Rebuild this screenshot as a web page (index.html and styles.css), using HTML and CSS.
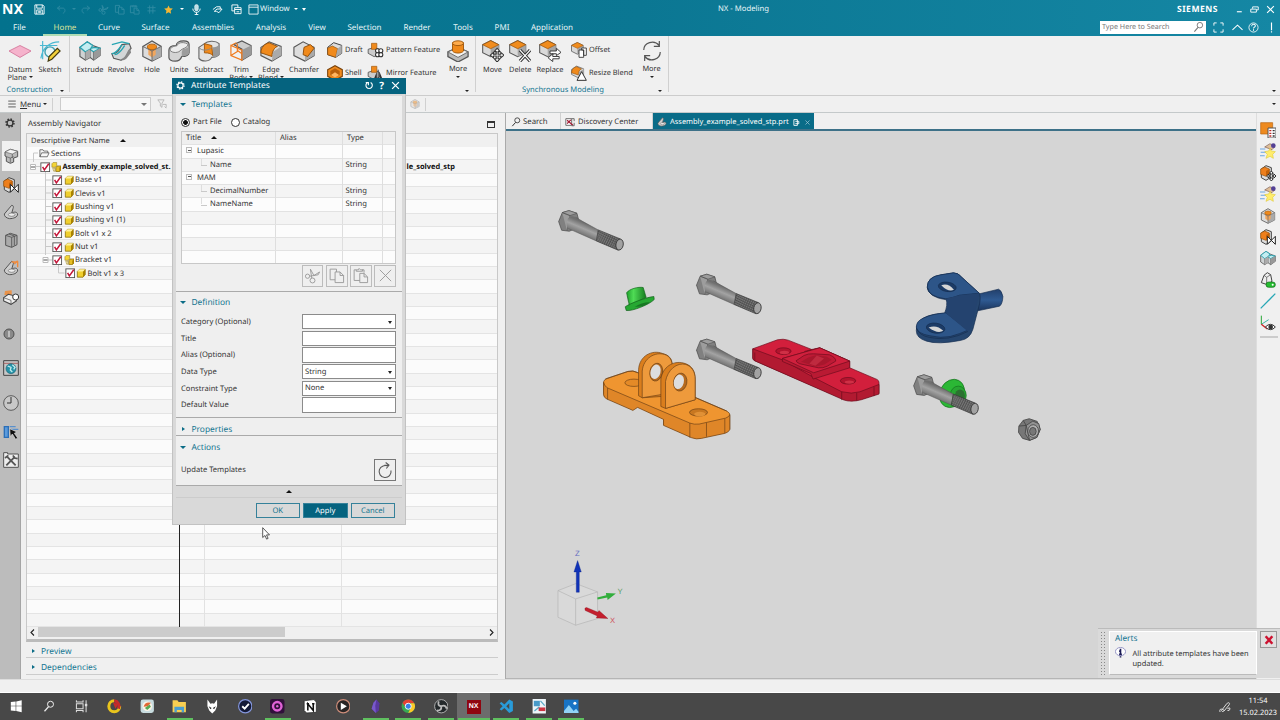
FILE: index.html
```html
<!DOCTYPE html>
<html lang="en">
<head>
<meta charset="utf-8">
<title>NX - Modeling</title>
<link rel="stylesheet" href="styles.css">
</head>
<body>
<svg class="defs" width="0" height="0">
<defs>
<linearGradient id="shaft" gradientUnits="userSpaceOnUse" x1="134" y1="70" x2="118" y2="108"><stop offset="0" stop-color="#6f6f6f"/><stop offset=".4" stop-color="#a3a3a3"/><stop offset="1" stop-color="#646464"/></linearGradient>
<linearGradient id="blu" x1="0" y1="0" x2="0" y2="1"><stop offset="0" stop-color="#223f6b"/><stop offset=".5" stop-color="#2f5a92"/><stop offset="1" stop-color="#1b355c"/></linearGradient>
<linearGradient id="grn" x1="0" x2="1"><stop offset="0" stop-color="#1fa02c"/><stop offset=".35" stop-color="#4fdc55"/><stop offset="1" stop-color="#157a1f"/></linearGradient>
<pattern id="thread" width="7" height="7" patternUnits="userSpaceOnUse" patternTransform="rotate(25)"><rect width="7" height="7" fill="#4c4c4c"/><path d="M0 0L7 7M5 0L0 5" stroke="#8e8e8e" stroke-width="1.500"/></pattern>
<symbol id="cubeO" viewBox="0 0 24 24"><path d="M2 7L12 2l10 5v10l-10 5L2 17z" fill="#d9d9d9" stroke="#555" stroke-width="1.3"/><path d="M12 12l10-5v10l-10 5z" fill="#a6a6a6"/><path d="M2 7L12 2l10 5-10 5z" fill="#f08c1e" stroke="#a35a0c"/></symbol>
<symbol id="cubeY" viewBox="0 0 24 24"><path d="M3 8l5-5h13v12l-5 6H3z" fill="#f0cf2e" stroke="#7d6200" stroke-width="1.6"/><path d="M16 8l5-5v12l-5 6z" fill="#a98200"/><path d="M3 8l5-5h13l-5 5z" fill="#fff29a"/></symbol>
<symbol id="asmY" viewBox="0 0 24 24"><path d="M2 4l3-3h8v7l-3 4H2z" fill="#f3d437" stroke="#7d6200"/><path d="M11 13l3-4h9v9l-4 4h-8z" fill="#e6bf25" stroke="#6e5600" stroke-width="1.4"/><path d="M19 13l4-4v9l-4 4z" fill="#a98200"/><path d="M4 14h5v7H6z" fill="#fff6c0" stroke="#7d6200"/></symbol>
<symbol id="check" viewBox="0 0 24 24"><rect x="2" y="2" width="20" height="20" fill="#fff" stroke="#4a4a4a" stroke-width="2"/><path d="M6 11l4 7L20 4" fill="none" stroke="#c4163a" stroke-width="3.4"/></symbol>
<symbol id="extrude" viewBox="0 0 24 24"><path d="M1 8l8-6 6 4 8 3v8l-7 5-4-3-5 3-6-4z" fill="#cfd3d4" stroke="#555" stroke-width="1.2"/><path d="M1 8l8-6 6 4-2 3 4-1 6 1-7 4-4-3-5 3z" fill="#c4edf1" stroke="#2ba3b0" stroke-width="1.4"/><path d="M7 13v9M12 10v9M16 13v9" stroke="#555"/><path d="M16 13l7-4v8l-7 5z" fill="#999"/><path d="M7 13l5-3v9l-5 3z" fill="#aaa"/></symbol>
<symbol id="revolve" viewBox="0 0 24 24"><path d="M2 15c8 0 8-6 11-10l8-1 2 5c-4 3-4 12-11 13L4 20z" fill="#d3d6d7" stroke="#555" stroke-width="1.2"/><path d="M12 21c6-2 6-9 10-12l1 5c-3 3-4 7-8 8z" fill="#888"/><path d="M2 5l11-3 8 2M2 15c6-1 8-6 11-10M5 16c6-1 8-6 11-10" fill="none" stroke="#24a5b2" stroke-width="1.4"/></symbol>
<symbol id="hole" viewBox="0 0 24 24"><path d="M2 7L12 1l10 6v11l-10 5-10-5z" fill="#dcdcdc" stroke="#555" stroke-width="1.2"/><path d="M12 12l10-5v11l-10 5z" fill="#aaa"/><path d="M8 8v8l4 3 4-3V8z" fill="#f2a65c"/><ellipse cx="12" cy="7.5" rx="5" ry="3" fill="#f08a1c" stroke="#b5630d"/><path d="M2 7l10 5 10-5M12 12v11" fill="none" stroke="#666"/></symbol>
<symbol id="unite" viewBox="0 0 24 24"><path d="M1 11c0-3 3-5 8-5 0-3 3-5 8-5 4 0 6 2 6 4v9c0 2-3 4-8 4-1 3-3 5-7 5-5 0-7-2-7-4z" fill="#d4d4d4" stroke="#555" stroke-width="1.3"/><path d="M16 10c4 0 7-2 7-5v9c0 2-3 4-8 4v-5z" fill="#9c9c9c"/><path d="M2 11c2-5 7-4 8-5 1-4 9-4 12-1-1 4-6 4-8 6-2 3-9 4-12 0z" fill="#ececec" stroke="#777"/></symbol>
<symbol id="subtract" viewBox="0 0 24 24"><path d="M1 8l6-4c3-3 12-4 16 0v12c-3 3-5 3-8 3-2 5-11 5-14 1z" fill="#e2e2e2" stroke="#666" stroke-width="1.2"/><path d="M16 8c4 0 7-2 7-4v12c-2 2-4 3-7 3z" fill="#999"/><path d="M7 4l8 2 1 11c-1-2-4-3-9-3z" fill="#f08a1c" stroke="#9e560b"/><path d="M1 8c2 4 11 4 14 0" fill="none" stroke="#888"/></symbol>
<symbol id="trim" viewBox="0 0 24 24"><path d="M4 5l9-4 10 5v10l-10 6V10z" fill="#ccc" stroke="#555" stroke-width="1.2"/><path d="M13 11l10-5v10l-10 6z" fill="#999"/><path d="M1 6l12 5v11L1 17zM1 6l6-3M1 17l8-5 4 3M8 4v8" fill="none" stroke="#f07a1c" stroke-width="1.3"/></symbol>
<symbol id="edge" viewBox="0 0 24 24"><path d="M1 8L10 2l13 5v10l-10 6-12-6z" fill="#ddd" stroke="#555" stroke-width="1.2"/><path d="M14 13l9-6v10l-10 6z" fill="#aaa"/><path d="M1 14C1 8 5 4 10 3l9 4c-3 1-6 5-6 11z" fill="#f08a1c" stroke="#8d4c08"/></symbol>
<symbol id="chamfer" viewBox="0 0 24 24"><path d="M1 8l10-6 12 6v9l-10 6-12-6z" fill="#ddd" stroke="#555" stroke-width="1.2"/><path d="M13 13l10-5v9l-10 6z" fill="#aaa"/><path d="M12 8l7-3 4 4-7 9-5-2z" fill="#f08a1c" stroke="#8d4c08"/></symbol>
<symbol id="draft" viewBox="0 0 24 24"><path d="M1 8L10 1l12 4v12l-9 6-12-4z" fill="#ddd" stroke="#444" stroke-width="1.5"/><path d="M1 9l7-3 8 4-3 13-12-4z" fill="#f08a1c" stroke="#8d4c08"/><path d="M16 10l6-5v12l-9 6z" fill="#aaa"/></symbol>
<symbol id="shell" viewBox="0 0 24 24"><path d="M1 7l11-6 11 6v10l-11 6-11-6z" fill="#f08a1c" stroke="#7b430a" stroke-width="1.6"/><path d="M5 9l7-4 7 4v6l-7 4-7-4z" fill="#b8600d"/><path d="M6 15l6-4 6 4-6 4z" fill="#ffb661"/></symbol>
<symbol id="boss" viewBox="0 0 24 24"><path d="M1 13l11-5 11 5v5l-11 6-11-6z" fill="#bbb" stroke="#555" stroke-width="1.4"/><path d="M1 13l11-5 11 5-11 6z" fill="#f2f2f2" stroke="#666"/><path d="M6 3v9c2 3 10 3 12 0V3z" fill="#f08a1c" stroke="#9e560b"/><ellipse cx="12" cy="3.5" rx="6" ry="2.6" fill="#ffac4d" stroke="#9e560b"/></symbol>
<symbol id="pattern" viewBox="0 0 24 24"><path d="M1 11l9-3 8 3v7l-8 4-9-5z" fill="#ccc" stroke="#555" stroke-width="1.3"/><path d="M6 2h8v9H6z" fill="#f08a1c" stroke="#9e560b"/><g fill="#fff" stroke="#333" stroke-width="1.6"><circle cx="15" cy="13" r="3"/><circle cx="20" cy="13" r="3"/><circle cx="15" cy="19" r="3"/><circle cx="20" cy="19" r="3"/></g></symbol>
<symbol id="mirror" viewBox="0 0 24 24"><path d="M1 11l9-3 8 3v7l-8 4-9-5z" fill="#ccc" stroke="#555" stroke-width="1.3"/><path d="M6 2h8v9H6z" fill="#f08a1c" stroke="#9e560b"/><path d="M9 22l5-12v12zM23 22l-5-12v12z" fill="#333"/><path d="M16 7v16" stroke="#333" stroke-width="1.4"/></symbol>
<symbol id="move" viewBox="0 0 24 24"><use href="#cubeO" x="-1" y="-1" width="21" height="21"/><path d="M16.500 9l3 3.500h-2v3h3v-2l3.500 3-3.500 3v-2h-3v3h2l-3 3.500-3-3.500h2v-3h-3v2L9 16.500l3.500-3v2h3v-3h-2z" fill="#fff" stroke="#333" stroke-width="1.200"/></symbol>
<symbol id="delete" viewBox="0 0 24 24"><use href="#cubeO" x="-1" y="-1" width="21" height="21"/><path d="M12 11l11 12M23 11L12 23" stroke="#333" stroke-width="3.600"/><path d="M12 11l11 12M23 11L12 23" stroke="#fff" stroke-width="1.400"/></symbol>
<symbol id="replace" viewBox="0 0 24 24"><use href="#cubeO" x="-1" y="-1" width="21" height="21"/><path d="M12 12h7V9l5 4.500-5 3.500v-2h-7zM22 18h-7v-3l-5 4.500 5 4v-3h7z" fill="#fff" stroke="#333" stroke-width="1"/></symbol>
<symbol id="offset" viewBox="0 0 24 24"><use href="#cubeO" x="-1" y="-1" width="21" height="21"/><path d="M12 12h7v11h-7zM16 9h7v11h-4v-8h-3z" fill="#fff" stroke="#333" stroke-width="1.300"/></symbol>
<symbol id="resize" viewBox="0 0 24 24"><use href="#edge" x="0" y="0" width="20" height="20"/><path d="M16 10l7 13H9z" fill="#fff" stroke="#333" stroke-width="1.500"/></symbol>
<symbol id="cycle" viewBox="0 0 24 24"><path d="M3 11C3 3 14-1 20 6M20 1v6h-6M21 13c0 8-11 12-17 5M4 23v-6h6" fill="none" stroke="#555" stroke-width="1.300"/></symbol>
<symbol id="wedge" viewBox="0 0 24 24"><path d="M2 6l7-5 8 3v14l-8 5-7-4z" fill="#ddd" stroke="#444" stroke-width="1.500"/><path d="M1 6l6-3 7 3v8l-5 3-8-3z" fill="#ee7f1c" stroke="#8d4c08"/><path d="M9 9l5-3v8l-5 3z" fill="#c46208"/><path d="M11 11l6 6-6 6zM23 11l-6 6 6 6z" fill="#fff" stroke="#222" stroke-width="1.500"/></symbol>
<symbol id="movepart" viewBox="0 0 24 24"><path d="M2 6l7-5 8 3v14l-8 5-7-4z" fill="#ddd" stroke="#444" stroke-width="1.500"/><path d="M1 6l6-3 7 3v8l-5 3-8-3z" fill="#ee7f1c" stroke="#8d4c08"/><path d="M9 9l5-3v8l-5 3z" fill="#c46208"/><path d="M17 9l3 3.500h-2v3h3v-2l3 3-3 3v-2h-3v3h2l-3 3.500-3-3.500h2v-3h-3v2l-3-3 3-3v2h3v-3h-2z" fill="#fff" stroke="#222" stroke-width="1.400"/></symbol>
<symbol id="gear" viewBox="0 0 24 24"><circle cx="12" cy="12" r="7" fill="none" stroke="currentColor" stroke-width="3"/><circle cx="12" cy="12" r="9.500" fill="none" stroke="currentColor" stroke-width="3.500" stroke-dasharray="3.730 3.730"/></symbol>
<symbol id="part" viewBox="0 0 24 24"><path d="M3 6l8-4 11 3v8l-6 2v6l-5 2-6-3v-7l-2-1z" fill="#bbb" stroke="#555" stroke-width="1.500"/><path d="M3 6l8-4 11 3-8 4z" fill="#f5f5f5" stroke="#666"/><path d="M14 9v6M5 13l6 2v7M11 15l5-2" stroke="#555" fill="none"/></symbol>
<symbol id="clamp" viewBox="0 0 24 24"><path d="M2 15L13 2c3 0 3 3 2 5l-2 7c4-3 8-2 9 1 0 5-7 7-12 7-5-1-8-3-8-7z" fill="#ccc" stroke="#555" stroke-width="1.500"/><ellipse cx="13" cy="16" rx="5" ry="2.500" fill="#eee" stroke="#666"/></symbol>
<symbol id="book" viewBox="0 0 24 24"><path d="M4 5l7-3 10 3v14l-8 4-9-3z" fill="#aaa" stroke="#555" stroke-width="1.500"/><path d="M4 5l9 3v15M13 8l8-3M9 3l8 3v14" fill="none" stroke="#555" stroke-width="1.300"/></symbol>
<symbol id="tag" viewBox="0 0 24 24"><path d="M0 9h8M1 14h8M0 19h7" stroke="#6ba5e2" stroke-width="1.600"/><path d="M7 6l8-5 7 5-4 4z" fill="#dfbf99" stroke="#7a5c54"/><circle cx="20" cy="4" r="3.500" fill="#534095"/><path d="M15 8l2 4 6 1-4 4 1 6-5-3-6 3 2-6-4-4 6-1z" fill="#ffec6b" stroke="#e3cd3c"/></symbol>
<symbol id="scissors" viewBox="0 0 24 24"><circle cx="12" cy="19" r="3.500"/><circle cx="5" cy="13" r="3"/><path d="M11 16L9 3l5 9 8-5-2 4-12 2"/></symbol>
<symbol id="copy" viewBox="0 0 24 24"><path d="M10 18H3V3h9v4M10 7h7l5 5v10H10zM17 7v5h5"/></symbol>
<symbol id="paste" viewBox="0 0 24 24"><path d="M6 4H3v15h8M14 4h3v4M6 6V4h3l1-2 2 2h3v2zM11 9h6l5 5v8H11zM17 9v5h5"/></symbol>
<symbol id="mag" viewBox="0 0 24 24"><circle cx="15" cy="8" r="6" fill="none" stroke="currentColor" stroke-width="2"/><path d="M11 13l-8 9" stroke="currentColor" stroke-width="2.400"/></symbol>
</defs></svg>

<div class="app">
<header class="top">
  <div class="titlebar">
    <b class="nx">NX</b>
    <svg viewBox="0 0 24 24"><path d="M2 2h17l3 3v17H2zM6 2v7h12V2M6 22v-9h12v9M9 16h6M9 19h6" fill="none" stroke="#fff" stroke-width="2"/></svg>
    <svg class="dim" viewBox="0 0 24 24"><path d="M9 4L3 9l6 5M3 9h12c6 0 6 10 0 11"/></svg>
    <i class="caret dimc"></i>
    <svg class="dim" viewBox="0 0 24 24"><path d="M15 4l6 5-6 5M21 9H9c-6 0-6 10 0 11"/></svg>
    <svg class="dim" viewBox="0 0 24 24"><use href="#scissors"/></svg>
    <svg class="dim" viewBox="0 0 24 24"><use href="#copy"/></svg>
    <svg class="dim" viewBox="0 0 24 24"><use href="#paste"/></svg>
    <svg class="dim" viewBox="0 0 24 24"><path d="M3 8h18M3 15h18M8 3v18M15 3v18"/></svg>
    <svg class="star" viewBox="0 0 24 24"><path d="M12 1l3.500 7.500 8 1-6 5.500 1.500 8-7-4-7 4 1.500-8-6-5.500 8-1z" fill="#f7b733"/></svg>
    <i class="caret"></i>
    <svg viewBox="0 0 24 24"><rect x="8" y="1" width="8" height="14" rx="4" fill="#bfe0e8" stroke="#fff"/><path d="M4 10c0 11 16 11 16 0M12 18v5M8 23h8" fill="none" stroke="#fff" stroke-width="2"/></svg>
    <svg viewBox="0 0 24 24"><path d="M2 12l8-6h8v5h4l-7 8-5-3H5l6-5h7" fill="none" stroke="#fff" stroke-width="2"/></svg>
    <svg viewBox="0 0 24 24"><path d="M2 2h13v6M8 15H2V2M8 8h14v13H8zM8 12h14M12 17h6" fill="none" stroke="#fff" stroke-width="2"/></svg>
    <svg viewBox="0 0 24 24"><path d="M2 2h20v20H2zM2 7h20" fill="none" stroke="#fff" stroke-width="1.800"/></svg>
    <span class="win">Window</span><i class="caret"></i><i class="caret over"></i>
    <span class="apptitle">NX - Modeling</span>
    <b class="siemens">SIEMENS</b>
    <svg class="wb" viewBox="0 0 24 24"><path d="M5 18h13" stroke="#fff" stroke-width="3"/></svg>
    <svg class="wb" viewBox="0 0 24 24"><path d="M2 11h15v8H2zM7 10V5h15v8h-4" fill="none" stroke="#fff" stroke-width="2.400"/></svg>
    <svg class="wb" viewBox="0 0 24 24"><path d="M3 3l18 18M21 3L3 21" stroke="#fff" stroke-width="3"/></svg>
  </div>
  <nav class="menu">
    <span>File</span><span class="on">Home</span><span>Curve</span><span>Surface</span><span>Assemblies</span><span>Analysis</span><span>View</span><span>Selection</span><span>Render</span><span>Tools</span><span>PMI</span><span>Application</span>
    <div class="search">Type Here to Search<svg viewBox="0 0 24 24"><use href="#mag"/></svg></div>
    <svg class="mi" viewBox="0 0 24 24"><path d="M2 8V2h6M16 2h6v6M22 16v6h-6M8 22H2v-6" fill="none" stroke="#fff" stroke-width="2"/></svg>
    <svg class="mi" viewBox="0 0 24 24"><path d="M1 17L12 7l11 10" fill="none" stroke="#fff" stroke-width="2.200"/></svg>
    <svg class="mi" viewBox="0 0 24 24"><circle cx="12" cy="12" r="10" fill="none" stroke="#fff" stroke-width="1.800"/><path d="M8 9c0-5 8-5 8-1 0 3-4 3-4 6M12 16v3" fill="none" stroke="#fff" stroke-width="2.200"/></svg>
    <svg class="mi" viewBox="0 0 24 24"><path d="M12 1v17M12 20v3" stroke="#fff" stroke-width="2.500"/></svg>
  </nav>
</header>

<section class="ribbon">
  <div class="tools">
    <div class="t"><svg viewBox="0 0 24 24"><path d="M0 12l12-6 12 6-12 7z" fill="#f5b3cc" stroke="#d4799d"/></svg>Datum<br>Plane <i class="caret k"></i></div>
    <div class="t"><svg viewBox="0 0 24 24"><path d="M1 6h19M4 1v20M2 20C4 8 12 2 22 2" fill="none" stroke="#4bb9d2" stroke-width="1.300"/><circle cx="12" cy="13" r="5.500" fill="#e8f5f6" stroke="#3c9fb0" stroke-width="1.500"/><path d="M10 23l1-5 9-9 3 3-9 9z" fill="#f3d13c" stroke="#443a10" stroke-width="1.300"/></svg>Sketch</div>
    <div class="sep"></div>
    <div class="t"><svg><use href="#extrude"/></svg>Extrude</div>
    <div class="t"><svg><use href="#revolve"/></svg>Revolve</div>
    <div class="t"><svg><use href="#hole"/></svg>Hole</div>
    <div class="t"><svg><use href="#unite"/></svg>Unite</div>
    <div class="t"><svg><use href="#subtract"/></svg>Subtract</div>
    <div class="t"><svg><use href="#trim"/></svg>Trim<br>Body <i class="caret k"></i></div>
    <div class="t"><svg><use href="#edge"/></svg>Edge<br>Blend <i class="caret k"></i></div>
    <div class="t"><svg><use href="#chamfer"/></svg>Chamfer</div>
    <div class="pair"><div><svg><use href="#draft"/></svg>Draft</div><div><svg><use href="#shell"/></svg>Shell</div></div>
    <div class="pair"><div><svg><use href="#pattern"/></svg>Pattern Feature</div><div><svg><use href="#mirror"/></svg>Mirror Feature</div></div>
    <div class="t more"><svg><use href="#boss"/></svg>More<br><i class="caret k"></i></div>
    <div class="sep"></div>
    <div class="t"><svg><use href="#move"/></svg>Move</div>
    <div class="t"><svg><use href="#delete"/></svg>Delete</div>
    <div class="t"><svg><use href="#replace"/></svg>Replace</div>
    <div class="pair"><div><svg><use href="#offset"/></svg>Offset</div><div><svg><use href="#resize"/></svg>Resize Blend</div></div>
    <div class="t more"><svg><use href="#cycle"/></svg>More<br><i class="caret k"></i></div>
    <div class="sep"></div>
  </div>
  <div class="groups"><span>Construction</span><i class="caret k"></i><i class="caret k"></i><span>Synchronous Modeling</span><i class="caret k"></i><i class="caret k"></i></div>
</section>

<section class="bar">
  <svg viewBox="0 0 24 24"><path d="M3 5h18M3 12h18M3 19h18" stroke="#444" stroke-width="2"/></svg>
  <span><u>M</u>enu</span><i class="caret k"></i><i class="vline"></i>
  <div class="combo"><i class="caret g"></i></div>
  <svg viewBox="0 0 24 24"><path d="M2 2h15l-5 8v10l-4-3v-7zM14 13h8v8M18 18l4 4" fill="none" stroke="#aaa" stroke-width="1.800"/></svg>
  <svg class="fade" viewBox="0 0 24 24"><use href="#hole"/></svg><i class="vline"></i><i class="caret k end"></i>
</section>

<main class="main">
  <aside class="strip">
    <div class="first"><svg><use href="#gear"/></svg></div>
    <div class="sel"><svg><use href="#part"/></svg></div>
    <div><svg><use href="#wedge"/></svg></div>
    <div><svg><use href="#clamp"/></svg></div>
    <div><svg><use href="#book"/></svg></div>
    <div><svg viewBox="0 0 24 24"><use href="#clamp"/><path d="M13 3h9v8M17 6l5-5" stroke="#f08a3c" fill="none" stroke-width="2"/></svg></div>
    <div><svg viewBox="0 0 24 24"><path d="M3 3l10-1v7H2z" fill="#e8924a"/><path d="M1 13l7-5 12 3v7l-8 5-11-5z" fill="#eee" stroke="#444" stroke-width="1.600"/><path d="M1 13l11 4v6" stroke="#444" fill="none"/><circle cx="19" cy="12" r="4.500" fill="#fff" stroke="#333" stroke-width="1.500"/></svg></div>
    <div class="info"><svg viewBox="0 0 24 24"><circle cx="12" cy="12" r="10" fill="#8a8a8a" stroke="#505050" stroke-width="2"/><path d="M12 6v12" stroke="#ddd" stroke-width="2.500"/></svg></div>
    <div><svg viewBox="0 0 24 24"><path d="M1 1h22v22H1z" fill="#c7c7c7" stroke="#444" stroke-width="1.500"/><path d="M1 5h22" stroke="#a66" stroke-width="1.500"/><circle cx="12" cy="13" r="7.500" fill="#2592a8" stroke="#206576"/><path d="M7 9l5 2-1 4 3 3M14 7l4 4-2 3" fill="none" stroke="#bdeaec" stroke-width="2"/></svg></div>
    <div><svg viewBox="0 0 24 24"><circle cx="12" cy="12" r="11" fill="#c8c8c8" stroke="#555" stroke-width="1.400"/><path d="M12 3v9H6" fill="none" stroke="#333" stroke-width="1.500"/></svg></div>
    <div><svg viewBox="0 0 24 24"><path d="M2 4h6v16H2z" fill="#5b9bdc" stroke="#2b6fb8" stroke-width="2"/><path d="M10 4h9M11 8h12" stroke="#5a90cc" stroke-width="2"/><path d="M10 7l11 5-4 2 5 7-3 2-5-8-3 4z" fill="#111" stroke="#ddd"/></svg></div>
    <div><svg viewBox="0 0 24 24"><path d="M1 3V1h6v2h16v20H1z" fill="#eee" stroke="#555" stroke-width="1.500"/><path d="M5 20L18 7M6 7l13 13" stroke="#555" stroke-width="2.800"/><path d="M15 5l2 4 5 1M3 9l5-4" stroke="#555" stroke-width="2.500" fill="none"/></svg></div>
  </aside>

  <section class="nav">
    <div class="navhead"><span>Assembly Navigator</span><i class="max"></i></div>
    <div class="tree">
      <div class="colhead">Descriptive Part Name <i class="up"></i></div>
      <div class="rows">
        <svg class="lines" viewBox="26 147 160 133"><path d="M33.500 153v9M33.500 153H38M36 166.500h4M45.500 172v83M45.500 180h6M45.500 193h6M45.500 206.500h6M45.500 220h6M45.500 233h6M45.500 246.500h6M48 260h4M58.500 265v8h6" fill="none" stroke="#c9c9c9"/><path d="M30.500 164.500h5v5h-5zM43 257.500h5v5h-5z" fill="#fff" stroke="#bbb"/><path d="M31 167h4M43.500 260h4" stroke="#555"/></svg>
        <div class="r r0"><svg viewBox="0 0 24 24"><path d="M2 20V4h7l2 3h9v4M2 20L6 11h17l-4 9z" fill="#f7f7f7" stroke="#444" stroke-width="1.600"/></svg><span>Sections</span></div>
        <div class="r r1"><svg><use href="#check"/></svg><svg><use href="#asmY"/></svg><b>Assembly_example_solved_st.</b><b class="col3">le_solved_stp</b></div>
        <div class="r r2"><svg><use href="#check"/></svg><svg><use href="#cubeY"/></svg><span>Base v1</span></div>
        <div class="r r2"><svg><use href="#check"/></svg><svg><use href="#cubeY"/></svg><span>Clevis v1</span></div>
        <div class="r r2"><svg><use href="#check"/></svg><svg><use href="#cubeY"/></svg><span>Bushing v1</span></div>
        <div class="r r2"><svg><use href="#check"/></svg><svg><use href="#cubeY"/></svg><span>Bushing v1 (1)</span></div>
        <div class="r r2"><svg><use href="#check"/></svg><svg><use href="#cubeY"/></svg><span>Bolt v1 x 2</span></div>
        <div class="r r2"><svg><use href="#check"/></svg><svg><use href="#cubeY"/></svg><span>Nut v1</span></div>
        <div class="r r2"><svg><use href="#check"/></svg><svg><use href="#asmY"/></svg><span>Bracket v1</span></div>
        <div class="r r3"><svg><use href="#check"/></svg><svg><use href="#cubeY"/></svg><span>Bolt v1 x 3</span></div>
        <div class="split"></div>
      </div>
      <div class="hscroll"><svg viewBox="0 0 24 24"><path d="M16 4l-8 8 8 8"/></svg><i></i><svg viewBox="0 0 24 24"><path d="M8 4l8 8-8 8"/></svg></div>
    </div>
    <div class="fold"><i class="tri"></i>Preview</div>
    <div class="fold"><i class="tri"></i>Dependencies</div>
  </section>

  <section class="view">
    <div class="tabs">
      <div class="tab ts"><svg><use href="#mag"/></svg>Search</div>
      <div class="tab td"><svg viewBox="0 0 24 24"><path d="M2 4h14v16H2z" fill="#fff" stroke="#555" stroke-width="2"/><path d="M5 16l9-9M5 8l14 12" stroke="#a31d35" stroke-width="3"/><path d="M16 4h6v6M22 14v7h-6" fill="none" stroke="#555" stroke-width="2"/></svg>Discovery Center</div>
      <div class="tab ta"><svg><use href="#clamp"/></svg>Assembly_example_solved_stp.prt<svg class="s" viewBox="0 0 24 24"><path d="M3 2h12v20H3zM8 8h12v8H8" fill="none" stroke="#fff" stroke-width="3"/></svg><svg class="s" viewBox="0 0 24 24"><path d="M5 5l14 14M19 5L5 19" stroke="#9cc7d6" stroke-width="2.500"/></svg></div>
    </div>
    <svg class="scene" viewBox="506 131 750 547.500">
      <defs><g id="bolt">
        <path d="M66 38l20-6 24 8 5 20-10 26-18 8-23-3-9-26z" fill="#808080" stroke="#444" stroke-width="2"/>
        <path d="M66 38l20-6 24 8-21 7zM66 38l23 9-9 45" fill="#9d9d9d" stroke="#444" stroke-width="1.500"/>
        <path d="M84 55c6-7 14-7 22-3l68 38-6 33-84-37c-7-8-6-22 0-31z" fill="url(#shaft)"/>
        <path d="M106 52l22 13 46 25M168 123L84 86" fill="none" stroke="#555" stroke-width="1.500"/>
        <path d="M174 90L240 117 234 151 168 123z" fill="url(#thread)" stroke="#333" stroke-width="2"/>
        <ellipse cx="238" cy="134" rx="11" ry="16.500" fill="#a2a2a2" stroke="#333" stroke-width="2.500" transform="rotate(10 238 134)"/>
      </g></defs>
      <g transform="translate(540 200) scale(.33333)">
        <use href="#bolt"/><use href="#bolt" x="414" y="191"/><use href="#bolt" x="414" y="386"/>
        <path d="M259 279c8-12 36-19 50-16l9 30-50 24z" fill="url(#grn)" stroke="#14671c" stroke-width="2"/>
        <path d="M255 321c10-9 67-30 86-31l1 9c-14 15-66 36-84 33z" fill="#26a832" stroke="#0f5c18" stroke-width="2"/><path d="M267 318l-6-30" stroke="#167322"/><path d="M284 321c12-9 32-15 45-14-11 9-26 15-45 14z" fill="#177723"/>
        <g stroke="#6b4015" stroke-width="2" stroke-linejoin="round">
          <path d="M190 546q2-7 10-10l63-21q16-4 28 3l269 116q11 6 9 14v40q-4 8-15 11l-70 15q-15 4-30-2l-84-37v-18l-78-36-14 9-78-34q-10-5-10-14z" fill="#ef9530"/>
          <path d="M190 548q2 12 13 17l246 105q13 5 28 3l80-18q10-4 12-10v45q-4 8-15 11l-70 15q-15 4-30-2l-84-37v-18l-78-36-14 9-78-34q-10-5-10-14z" fill="#df8628"/>
          <path d="M195 538l68-23q16-4 28 3l269 116" fill="none"/>
          <path d="M202 565v34M449 670v44M499 669v42M554 657v43" fill="none"/>
          <ellipse cx="281" cy="549" rx="27" ry="11" fill="#e48a27"/><ellipse cx="475" cy="638" rx="27" ry="11" fill="#c87720"/><ellipse cx="479" cy="643" rx="17" ry="7" fill="#e19136" stroke="none"/>
          <path d="M295 588V510c2-43 42-61 72-49 19 5 29 15 29 34v93l-90 6z" fill="#da7e1d"/>
          <path d="M306 594V514c3-39 39-59 67-50 16 4 23 19 23 35v80z" fill="#ee9a3c"/>
          <ellipse cx="348" cy="517" rx="19" ry="27" fill="#b66a1e" transform="rotate(12 348 517)"/><ellipse cx="346" cy="516" rx="15" ry="22" fill="#ddd" stroke="none" transform="rotate(16 346 516)"/>
          <path d="M362 620V538c5-36 37-57 69-48 24 7 34 23 34 48v62l-89 26z" fill="#da7e1d"/>
          <path d="M376 626V545c6-35 34-58 61-51 18 6 28 22 28 44v62z" fill="#ee9a3c"/>
          <ellipse cx="420" cy="547" rx="20" ry="27" fill="#b66a1e" transform="rotate(10 420 547)"/><ellipse cx="416" cy="546" rx="15" ry="22" fill="#ddd" stroke="none" transform="rotate(14 416 546)"/>
        </g>
      </g>
      <g transform="translate(740 260) scale(.33333)">
        <g stroke="#6b0c1c" stroke-width="2" stroke-linejoin="round">
          <path d="M38 267l74-27q18-4 32 1l71 28 24-5 90 40v20l82 35q6 3 6 10v32l-53 17q-30 8-52 1L44 303q-6-3-6-8z" fill="#d21f3c"/>
          <path d="M38 267l91 34 92 52 84 43q30 8 55 0l57-22v29l-53 17q-30 8-52 1L44 303q-6-3-6-8z" fill="#b21a31"/>
          <path d="M127 296l112-32 90 40v20l-110 34-7-17-85-36z" fill="#b91a33"/>
          <path d="M127 296l112-32 90 40-108 35z" fill="#d0203d"/>
          <path d="M168 303l24-16q13-6 28-5l48 3q20 8 19 19l-25 15q-13 7-27 5l-56-12q-10-4-11-9z" fill="#bd1a35"/>
          <path d="M183 306l22-13 22-7 32 4 16 10-22 14-26 6z" fill="#a8172d" stroke="none"/><path d="M230 287l22 9-26 22-18-6z" fill="#bf2a3f" stroke="none"/>
          <ellipse cx="130" cy="274" rx="23" ry="10" fill="#b2142e"/><ellipse cx="324" cy="363" rx="23" ry="10" fill="#b2142e"/>
          <ellipse cx="133" cy="278" rx="14" ry="5" fill="#cf3046" stroke="none"/><ellipse cx="328" cy="367" rx="14" ry="5" fill="#cf3046" stroke="none"/>
          <path d="M44 303V278M305 396v25M350 399v24M402 381v28M215 269l-22 6" fill="none"/>
        </g>
        <g stroke="#142c4f" stroke-width="2">
          <path d="M710 104l66-16q9 3 13 22-1 22-10 29l-66 14z" fill="url(#blu)"/>
          <path d="M562 82q0-31 40-37l38-6q15 0 23 11l55 50q5 9 1 32l-20 76q-9 30-38 34-67 13-101 2-31-9-31-31-1-26 23-39 22-12 62-14 10-25 5-42-55-8-57-36z" fill="#26466f"/>
          <path d="M562 82q0-31 40-37l38-6q15 0 23 11l55 50-59 6q-20 8-42 11-55-8-55-35z" fill="#2d5588"/>
          <path d="M529 202q0-19 23-28 25-12 66-15l66 52q-23 11-53 19-28 6-61-2-39-7-41-26z" fill="#2d5588"/>
          <path d="M659 106l59-6q0 10-27 110-6 5-7 5l-66-55q8-28 0-43z" fill="#24436f" stroke="none"/>
          <path d="M563 84q5 29 56 36M529 205q9 22 40 28 56 12 115-18" fill="none"/>
          <ellipse cx="622" cy="81" rx="27" ry="14" fill="#1c3b66" transform="rotate(8 622 81)"/><path d="M604 76q21-8 38 14-17 8-38-14z" fill="#d5d5d5" stroke="none"/>
          <ellipse cx="587" cy="205" rx="28" ry="15" fill="#1c3b66" transform="rotate(8 587 205)"/><path d="M566 203q24-10 44 10-17 10-44-10z" fill="#d5d5d5" stroke="none"/>
        </g>
        <ellipse cx="636" cy="401" rx="36" ry="44" fill="#2bb735" stroke="#14701d" stroke-width="2" transform="rotate(28 636 401)"/>
        <ellipse cx="655" cy="407" rx="24" ry="28" fill="#28a632" stroke="#14701d" stroke-width="2"/><ellipse cx="660" cy="408" rx="15" ry="19" fill="#2c7131"/>
        <use href="#bolt" x="466" y="313"/>
        <g stroke="#444" stroke-width="2.500" stroke-linejoin="round"><path d="M837 499l13-17 18-5 24 8 9 24-10 24-22 9-21-6-12-18z" fill="#777"/><path d="M859 497l20-13 18 8 4 17-10 24-22 9-13-20z" fill="#929292"/><path d="M838 499l21-2 10 44M859 497l-9-15" fill="none"/><ellipse cx="880" cy="514" rx="16" ry="19" fill="#b0b0b0"/><ellipse cx="879" cy="515" rx="10" ry="12" fill="#777"/></g>
      </g>
      <g transform="translate(500 540) scale(.33333)">
        <path d="M173 153l54-21 65 25v80l-66 20-53-24z" fill="#d9d9d9" stroke="#b3b3b3" stroke-width="2"/><path d="M173 153l53 25 66-21M226 178v79" fill="none" stroke="#b3b3b3" stroke-width="2"/>
        <path d="M228 158V97h-7l11-34 11 34h-6v61z" fill="#1133b8" stroke="#0a2283"/><path d="M291 174l27-7-1-7 30 2-25 19-1-7-29 6z" fill="#32ae3c"/>
        <path d="M259 204l34 14 3-5 27 24-35-2 3-6-36-16q-4-9 4-9z" fill="#c41f2e" stroke="#84131e"/>
        <text x="224" y="50" fill="#626bc0">Z</text><text x="352" y="164" fill="#5b9c61">Y</text><text x="329" y="251" fill="#cf5560">X</text>
      </g>
    </svg>
    <div class="alert">
      <i class="grip"></i>
      <div class="card"><h4>Alerts</h4><div class="msg"><svg viewBox="0 0 24 24"><ellipse cx="12" cy="10" rx="11" ry="9" fill="#fff" stroke="#8e8ec2" stroke-width="2"/><path d="M12 4v3M9 9h3v7M9 16h6M12 20v3" stroke="#1a1a55" stroke-width="3.500" fill="none"/></svg><p>All attribute templates have been updated.</p></div></div>
      <div class="x"><svg viewBox="0 0 24 24"><path d="M4 3l16 18M20 3L4 21" stroke="#cc1230" stroke-width="6"/></svg></div>
    </div>
  </section>

  <aside class="right">
    <svg viewBox="0 0 24 24"><path d="M1 1h18v17H1z" fill="#ee8a1f" stroke="#b76410"/><path d="M12 9h12v15H12z" fill="#fff" stroke="#555" stroke-width="1.500"/><path d="M14 13h3M14 17h3M14 21h3" stroke="#b22" stroke-width="2"/><path d="M19 13h3M19 17h3M19 21h3" stroke="#333" stroke-width="2"/></svg>
    <svg><use href="#tag"/></svg><svg><use href="#movepart"/></svg><svg><use href="#tag"/></svg><svg><use href="#hole"/></svg><svg><use href="#wedge"/></svg><svg><use href="#extrude"/></svg>
    <svg viewBox="0 0 24 24"><path d="M2 16L6 5l5-4 5 3 2 10-7 5z" fill="#eee" stroke="#444" stroke-width="1.500"/><path d="M6 5l4 3 6-4M10 8v11" stroke="#444" fill="none"/><rect x="9" y="15" width="14" height="8" rx="4" fill="#26bd31" stroke="#126719"/><circle cx="19" cy="19" r="1.500" fill="#fff"/></svg>
    <svg viewBox="0 0 24 24"><path d="M1 23L23 1" stroke="#27a7b5" stroke-width="1.900"/></svg>
    <svg viewBox="0 0 24 24"><path d="M2 14V1" stroke="#29a738" stroke-width="1.500"/><path d="M2 14l11-7" stroke="#3bb4a4" stroke-width="1.500"/><path d="M2 14l9 7" stroke="#c22" stroke-width="2"/><path d="M8 18q8-8 15 0-7 8-15 0z" fill="#fff" stroke="#333" stroke-width="1.500"/><circle cx="16" cy="18" r="3.500" fill="#333"/></svg>
    <i></i>
  </aside>
</main>

<div class="status"></div>
<footer class="task">
  <div class="apps">
    <div><svg viewBox="0 0 24 24"><path d="M3 5l8-1v7H3zM12 4l9-2v9h-9zM3 12h8v8l-8-1zM12 12h9v10l-9-2z" fill="#fff"/></svg></div>
    <div class="lt"><svg><use href="#mag"/></svg></div>
    <div><svg viewBox="0 0 24 24"><path d="M4 8h11v8H4zM4 2v3h11V2M4 22v-3h11v3M20 2v20" fill="none" stroke="#ddd" stroke-width="1.700"/><path d="M18 8h4v4h-4z" fill="#ddd"/></svg></div>
    <div><svg viewBox="0 0 24 24"><path d="M12 3a9 9 0 1 0 9 9" fill="none" stroke="#eac51c" stroke-width="5"/><path d="M12 3a9 9 0 0 1 7 13" fill="none" stroke="#c62b2b" stroke-width="5"/><path d="M10 6l9 2-5 8z" fill="#c62b2b"/></svg></div>
    <div><svg viewBox="0 0 24 24"><rect x="1" y="1" width="22" height="22" rx="4" fill="#c8dcdf"/><circle cx="12" cy="12" r="8" fill="#faf4e8"/><path d="M6 13q2-9 12-7l-5 6z" fill="#e16835"/><path d="M8 15l8-6 2 4-6 5z" fill="#58a951"/></svg></div>
    <div class="run"><svg viewBox="0 0 24 24"><path d="M1 2h8l2 3h12v17H1z" fill="#f8cf51"/><path d="M4 13h16v9h-4v-4H8v4H4z" fill="#4b9fd0"/></svg></div>
    <div><svg viewBox="0 0 24 24"><path d="M4 1l5 7 3-1 3 1 5-7v11l-3 7-5 5-5-5-3-7z" fill="#fff"/><path d="M6 12l5 3-2 2zM18 12l-5 3 2 2z" fill="#222"/></svg></div>
    <div><svg viewBox="0 0 24 24"><circle cx="12" cy="12" r="11" fill="#131936" stroke="#8496dc" stroke-width="2"/><path d="M7 12l4 4 7-8" fill="none" stroke="#fff" stroke-width="3"/></svg></div>
    <div class="run"><svg viewBox="0 0 24 24"><rect x="0" y="0" width="24" height="24" rx="4" fill="#31103b"/><circle cx="12" cy="12" r="7" fill="none" stroke="#df62d7" stroke-width="4"/><circle cx="12" cy="12" r="2" fill="#df62d7"/></svg></div>
    <div><svg viewBox="0 0 24 24"><path d="M2 3l16-2 4 4v17L6 23l-4-4z" fill="#fff" stroke="#111"/><path d="M8 19V8l9 11V8M6 8h4M15 8h4" fill="none" stroke="#111" stroke-width="2.600"/></svg></div>
    <div><svg viewBox="0 0 24 24"><circle cx="12" cy="12" r="11" fill="#292525" stroke="#cd8d7a" stroke-width="2"/><path d="M8 6l10 6-10 6z" fill="#fff"/></svg></div>
    <div class="run"><svg viewBox="0 0 24 24"><path d="M14 1l5 6-1 12-5 4-7-7 3-10z" fill="#59389f"/><path d="M14 1l-2 10 1 12-7-7 3-10z" fill="#7959cc"/></svg></div>
    <div class="run"><svg viewBox="0 0 24 24"><circle cx="12" cy="12" r="11" fill="#39a852"/><path d="M2.500 6.500A11 11 0 0 1 22 7H12L8 14z" fill="#e34133"/><path d="M22 7a11 11 0 0 1-10 16l4-8 0-8z" fill="#fbc928"/><circle cx="12" cy="12" r="5" fill="#377fe5" stroke="#fff" stroke-width="1.500"/></svg></div>
    <div class="run"><svg viewBox="0 0 24 24"><circle cx="12" cy="12" r="11" fill="#24292b" stroke="#bbb" stroke-width="1.500"/><path d="M12 12Q5 11 8 4M12 12q7-3 9 4M12 12q1 8-7 7" fill="none" stroke="#bbb" stroke-width="3"/></svg></div>
    <div class="run cur"><span>NX</span></div>
    <div class="run"><svg viewBox="0 0 24 24"><path d="M17 1l6 3v16l-6 3-8-8-5 4-3-2 5-5-5-5 3-2 5 4zM17 7l-5 5 5 5z" fill="#299bd9" fill-rule="evenodd"/></svg></div>
    <div class="run"><svg viewBox="0 0 24 24"><path d="M1 0h22v24H1z" fill="#edf4f8"/><path d="M3 3h10v9H3z" fill="#489ac9"/><path d="M14 3l7 8M4 20l7-6 4 5" stroke="#58a9c7" stroke-width="2" fill="none"/><path d="M11 14h11v6H11z" fill="#ce3543"/></svg></div>
    <div class="run"><svg viewBox="0 0 24 24"><path d="M0 1h24v22H0z" fill="#1874c5"/><path d="M0 20l8-10 8 10 4-4 4 5v2H0z" fill="#92d3f6"/><circle cx="18" cy="7" r="2.500" fill="#fff"/></svg></div>
  </div>
  <svg class="pen" viewBox="0 0 24 24"><path d="M2 22q-2-8 6-5c5 2-1 7-3 2l10-13c4-5 8-2 5 2L10 20M17 15q6-3 5 1t-5 3" fill="none" stroke="#ddd" stroke-width="2"/></svg>
  <div class="clock">11:54<br>15.02.2023</div>
</footer>

<section class="dialog">
  <div class="dt"><svg><use href="#gear"/></svg><span>Attribute Templates</span>
    <svg viewBox="0 0 24 24"><path d="M2 4h7v7M15 4a8.500 8.500 0 1 1-8 0" fill="none" stroke="#fff" stroke-width="3"/></svg><b>?</b><svg viewBox="0 0 24 24"><path d="M3 3l18 18M21 3L3 21" stroke="#fff" stroke-width="3.500"/></svg></div>
  <div class="sec s1"><h3><i class="down"></i>Templates</h3>
    <div class="radios"><i class="rad on"></i><span>Part File</span><i class="rad"></i><span>Catalog</span></div>
    <div class="tbl">
      <div class="tr th"><span>Title <i class="up"></i></span><span>Alias</span><span>Type</span><span></span></div>
      <div class="tr"><span class="n1"><i class="minus"></i>Lupasic</span><span></span><span></span><span></span></div>
      <div class="tr"><span class="n2">Name</span><span></span><span>String</span><span></span></div>
      <div class="tr"><span class="n1"><i class="minus"></i>MAM</span><span></span><span></span><span></span></div>
      <div class="tr"><span class="n2">DecimalNumber</span><span></span><span>String</span><span></span></div>
      <div class="tr"><span class="n2">NameName</span><span></span><span>String</span><span></span></div>
      <div class="tr"><span></span><span></span><span></span><span></span></div>
      <div class="tr"><span></span><span></span><span></span><span></span></div>
      <div class="tr"><span></span><span></span><span></span><span></span></div>
      <div class="tr"><span></span><span></span><span></span><span></span></div>
    </div>
    <div class="acts"><div><svg><use href="#scissors"/></svg></div><div><svg><use href="#copy"/></svg></div><div><svg><use href="#paste"/></svg></div><div><svg viewBox="0 0 24 24"><path d="M4 4l16 16M20 4L4 20"/></svg></div></div>
  </div>
  <div class="sec s2"><h3><i class="down"></i>Definition</h3>
    <div class="form">
      <label>Category (Optional)</label><div class="f"><i class="caret k"></i></div>
      <label>Title</label><div class="f"></div>
      <label>Alias (Optional)</label><div class="f"></div>
      <label>Data Type</label><div class="f">String<i class="caret k"></i></div>
      <label>Constraint Type</label><div class="f">None<i class="caret k"></i></div>
      <label>Default Value</label><div class="f"></div>
    </div>
  </div>
  <div class="sec s3"><h3><i class="tri"></i>Properties</h3></div>
  <div class="sec s4"><h3><i class="down"></i>Actions</h3><div class="upd"><span>Update Templates</span><div><svg viewBox="0 0 24 24"><path d="M17 6A9 9 0 1 0 21 12M11 4h7M13 0l5 4-4 5" fill="none" stroke="#555" stroke-width="1.600"/></svg></div></div></div>
  <div class="collapse"><i class="up"></i></div>
  <div class="btns"><span>OK</span><span class="pri">Apply</span><span>Cancel</span></div>
</section>
<svg class="cursor" viewBox="0 0 8 13"><path d="M.7.700v9.800l2.300-2 1.600 3.600 1.500-.7-1.600-3.500h3z" fill="#fff" stroke="#333" stroke-width=".8"/></svg>
</div>
</body>
</html>
```

FILE: styles.css
```css
* { box-sizing: border-box; }
body { margin: 0; font-family: "Noto Sans", "Open Sans", sans-serif; font-size: 7.6px; line-height: 9px; color: #333; text-rendering: geometricPrecision; }
svg { display: block; flex: none; }
h3, h4, p { margin: 0; font-weight: 400; }
.defs { position: absolute; }
.app { position: relative; width: 1280px; height: 720px; overflow: hidden; background: #f0f0f0; display: flex; flex-direction: column; white-space: nowrap; }

.caret { display: inline-block; flex: none; width: 0; height: 0; border: 2px solid transparent; border-top: 2.500px solid #fff; border-bottom: 0; justify-self: center; }
.caret.k { border-top-color: #222; }
.caret.g { border-top-color: #777; border-width: 3px 3px 0; }
.up { display: inline-block; border: 3px solid transparent; border-bottom: 3.500px solid #111; border-top: 0; }
.down { flex: none; border: 3px solid transparent; border-top: 3.500px solid #0b6c86; border-bottom: 0; }
.tri { flex: none; border: 2.500px solid transparent; border-left: 3.500px solid #0b6c86; border-right: 0; }

.top { height: 36px; color: #e9f6f8; background: linear-gradient(90deg, #03728d, #0b7793 50%, #1587a4); }
.titlebar { height: 18px; display: grid; align-items: center; grid-template-columns: 28px 23px 20px 6px 17px 18px 14px 16px 18px 17px 9px 21px 20px 19px 14px 32px 7px 9px 869px 55px 14px 16px 17px; }
.titlebar svg { width: 11px; height: 11px; justify-self: center; }
.titlebar .star { width: 9px; }
.titlebar .dim { fill: none; stroke: #2f8ba3; stroke-width: 2; }
.titlebar .dimc { border-top-color: #2f8ba3; }
.nx { font-size: 14px; padding-left: 2px; letter-spacing: .4px; color: #fff; }
.win { font-size: 7.800px; }
.over { border-top-width: 3px; box-shadow: 0 -4px 0 -3px #fff; }
.apptitle { padding: 1px 0 0 410px; font-size: 7.700px; }
.siemens { color: #fff; font-size: 8.600px; letter-spacing: .5px; padding-top: 1.500px; }
.titlebar .wb { width: 9px; height: 9px; }
.menu { height: 18px; display: grid; align-items: center; justify-items: center; font-size: 8px; grid-template-columns: 39px 52px 36px 57px 58px 58px 34px 61px 44px 48px 30px 70px 1fr 24px 14px 18px 18px; }
.menu > span { height: 18px; line-height: 19.500px; }
.menu .on { width: 44px; text-align: center; color: #dfe59a; box-shadow: inset 0 -2px 0 #afdcb4; }
.search { justify-self: end; width: 106px; height: 13px; background: #fff; color: #777; padding: 0 2px; display: flex; align-items: center; justify-content: space-between; font-size: 7.200px; }
.search svg { width: 11px; height: 12px; }
.mi { width: 11px; height: 11px; }

.ribbon { height: 60px; border-bottom: 1px solid #ccc; }
.tools { height: 50px; display: grid; padding-left: 4px; grid-template-columns: 32px 28px 10px 32px 30px 32px 22px 38px 26px 34px 32px 46px 76px 32px 2px 33px 22px 38px 67px 31px 2px; font-size: 7.400px; }
.t { display: flow-root; text-align: center; padding-top: 4px; line-height: 8.500px; }
.t > svg { width: 22px; height: 22px; margin: 0 auto 3.800px; }
.t .caret { vertical-align: 2px; }
.t.more > svg { margin-bottom: 3px; }
.sep { width: 1px; height: 56px; background: #d0d0d0; justify-self: center; }
.pair { padding: 5.500px 0 0 7px; display: flex; flex-direction: column; gap: 6px; }
.pair div { display: flex; align-items: center; gap: 2px; height: 17px; }
.pair svg { width: 16px; height: 16px; }
.pair + .pair { padding-left: 1px; }
.pair + .pair svg { width: 17px; }
.tools > .pair:nth-child(19) { padding-left: 2px; }
.groups { display: grid; grid-template-columns: 59px 6px 404px 188px 6px 613px; line-height: 9px; align-items: center; color: #147590; }
.groups span { justify-self: center; }
.groups .caret:nth-child(3), .groups .caret:last-child { justify-self: end; }

.bar { height: 17px; border-bottom: 1px solid #c4c9ca; padding: 0 4px 0 7px; display: flex; align-items: center; }
.bar > svg { width: 10px; height: 10px; }
.bar > span { margin: 2px 2px 0 3px; font-size: 7.800px; }
.bar .vline { width: 1px; height: 13px; background: #d0d0d0; margin-left: 5px; }
.combo { width: 91px; height: 14px; margin: 0 6px 0 7px; border: 1px solid #ccc; background: #f8f8f8; display: flex; align-items: center; justify-content: flex-end; padding-right: 3px; }
.bar .fade { opacity: .5; margin-left: 243px; }
.bar .end { margin-left: auto; }

.main { height: 566px; display: grid; grid-template-columns: 21px 485px 750px 24px; }
.strip { background: #bcbcbc; border-right: 1px solid #a5a5a5; display: grid; grid-template-rows: 28px 30px 27px 28px 28px 28px 30px 44px 24px 46px 12px 44px; }
.strip div { display: flex; align-items: center; justify-content: center; padding-left: 2px; }
.strip svg { width: 16px; height: 16px; }
.strip .first { align-items: flex-start; padding: 5px 0 0; color: #333; }
.strip .first svg { width: 10px; height: 10px; }
.strip .sel { background: #f0f0f0; margin-left: 2px; padding: 0; }
.strip .info { padding: 0 2px 0 0; }
.strip .info svg { width: 12px; height: 12px; }

.nav { padding: 0 7px 0 5px; border-right: 1px solid #aaa; }
.navhead { height: 20px; padding: 3px 3px 0 2px; display: flex; align-items: center; justify-content: space-between; font-size: 7.800px; }
.max { width: 8px; height: 7px; border: 1px solid #333; border-top-width: 2px; }
.tree { height: 509px; border: 1px solid #c8c8c8; border-bottom: 3px solid #bbb; }
.colhead { height: 13px; padding-left: 4px; line-height: 14px; font-size: 7.500px; }
.colhead .up { margin-left: 8px; vertical-align: 1px; }
.rows { position: relative; height: 479.500px; overflow: hidden; background: linear-gradient(90deg, transparent 176.500px, #e2e2e2 176.500px 177.500px, transparent 177.500px 314px, #e2e2e2 314px 315px, transparent 315px), repeating-linear-gradient(#fbfbfb 0 12.330px, #e4e4e4 12.330px 13.330px, #f4f4f4 13.330px 25.660px, #e4e4e4 25.660px 26.660px); }
.lines { position: absolute; left: -1px; top: 0; width: 160px; height: 133px; }
.r { position: relative; height: 13.330px; display: flex; align-items: center; }
.r svg { width: 10.500px; height: 10.500px; margin-right: 1px; }
.r span, .r b { padding-top: 1px; }
.r0 { padding-left: 12px; }
.r0 span { padding-left: .5px; }
.r1 { padding-left: 13px; color: #111; }
.r1 svg { margin-right: 0; }
.r1 b { margin-left: 1.500px; font-size: 7.350px; width: 110px; }
.r1 .col3 { margin: 0 0 0 234px; width: 53px; font-size: 7.450px; }
.r2 { padding-left: 25px; }
.r3 { padding-left: 37.500px; }
.split { position: absolute; left: 152px; bottom: 0; width: 1px; height: 110px; background: #222; }
.hscroll { height: 11px; background: #f0f0f0; display: flex; align-items: center; gap: 1px; padding: 0 1px; }
.hscroll svg { width: 9px; height: 9px; fill: none; stroke: #222; stroke-width: 3; }
.hscroll i { width: 247px; height: 10px; background: #ccc; margin-right: auto; }
.fold { height: 16.300px; display: flex; align-items: center; gap: 6px; padding: 3px 0 0 6px; font-size: 8.400px; color: #147590; border-bottom: 1px solid #ccc; }

.view { position: relative; background: #d5d5d5; border-bottom: 1px solid #b5b5b5; }
.tabs { height: 18px; background: #f0f0f0; border-bottom: 2px solid #3d7188; display: flex; font-size: 7.800px; }
.tab { display: flex; align-items: center; gap: 3px; border-right: 1px solid #d0d0d0; padding-top: 2px; }
.tab svg { width: 10px; height: 10px; }
.ts { width: 55px; padding-left: 5px; gap: 2px; }
.td { width: 92px; padding-left: 4px; font-size: 7.600px; }
.ta { width: 161px; background: #096c88; color: #fff; padding-left: 4px; border: 0; font-size: 7.450px; }
.tab .s { width: 7px; height: 7px; margin-left: 1px; }
.scene { width: 750px; height: 547px; }
.scene text { font: 23px "Liberation Sans", sans-serif; }
.alert { position: absolute; left: 592px; top: 515px; width: 182px; height: 50px; background: #dadada; border-top: 1px solid #bbb; display: flex; gap: 3px; padding: 2px 3px 3px 2px; z-index: 1; }
.grip { width: 6px; background: radial-gradient(circle, #888 .7px, transparent .9px) 0 0 / 3px 3px; }
.card { width: 148px; background: #f0f0f0; border: 1px solid #fff; border-bottom-color: #bbb; padding: 2px 5px; }
.card h4 { color: #147590; font-size: 8.300px; }
.msg { display: flex; gap: 6.500px; padding-top: 4px; white-space: normal; }
.msg svg { width: 11px; height: 11px; }
.msg p { line-height: 10px; padding-top: 2px; font-size: 7.450px; }
.x { width: 17px; height: 17px; border: 1px solid #999; display: grid; place-items: center; background: #e0e0e0; }
.x svg { width: 10px; height: 10px; }
.right { border-left: 1px solid #ddd; padding: 9px 0 0 3px; display: flex; flex-direction: column; gap: 5.400px; }
.right svg { width: 16px; height: 16px; }
.right i { width: 18px; height: 2px; background: #ccc; }

.status { height: 14px; border-bottom: 1px solid #fff; border-top: 1px solid #ddd; }
.task { height: 27px; background: #484848; color: #fff; display: flex; align-items: center; }
.apps { display: grid; grid-template-columns: repeat(18, 32.670px); height: 27px; flex: none; }
.apps div { display: grid; place-items: center; }
.apps svg { width: 14.500px; height: 14.500px; }
.apps .lt { color: #eee; }
.apps .lt svg { width: 12px; }
.apps .run { background: linear-gradient(#5fc05f, #5fc05f) 50% 100% / 26px 2px no-repeat; }
.apps .cur { background-color: #6c6c6c; background-size: 32px 2px; }
.cur span { width: 14px; height: 14px; background: #8f0610; font: bold 7px/14px "Liberation Sans", sans-serif; text-align: center; }
.pen { width: 12px; height: 12px; margin-left: 631px; }
.clock { margin-left: auto; width: 44px; text-align: center; line-height: 12px; font-size: 7.400px; }

.dialog { position: absolute; left: 172px; top: 78px; width: 234px; height: 447px; background: #d9d9d9; border: 1px solid #c2c2c2; border-top: 0; padding: 0 3px; z-index: 5; }
.dt { height: 15.500px; margin: 0 -4px 2.500px; background: #05637f; color: #fff; display: flex; align-items: center; padding: 0 6px 0 4px; font-size: 8.500px; }
.dt svg { width: 9px; height: 9px; }
.dt span { margin: 0 auto 0 6px; }
.dt b { margin: 0 7px 0 5px; font-size: 10px; }
.sec { background: #efefef; border-bottom: 1.500px solid #aaa; padding: 0 6px 0 5px; }
.s1 { height: 196px; } .s2 { height: 126px; } .s3 { height: 18px; } .s4 { height: 50px; }
h3 { display: flex; align-items: center; gap: 5.500px; height: 17.500px; color: #147590; font-size: 8.400px; margin-left: -1px; }
.radios { display: flex; align-items: center; height: 17.500px; }
.radios span { padding-top: 1px; }
.rad { width: 9px; height: 9px; border: 1px solid #333; border-radius: 50%; margin: 0 3px 0 0; background: #fff; }
.rad.on { background: radial-gradient(circle, #111 2px, #fff 2.700px); }
.rad:not(.on) { margin-left: 9px; }
.tbl { height: 132.500px; border: 1px solid #c8c8c8; background: #fcfcfc; overflow: hidden; }
.tr { height: 13.250px; display: grid; grid-template-columns: 94px 67px 40px 1fr; line-height: 13.700px; border-bottom: 1px solid #e2e2e2; }
.tr:nth-child(odd) { background: #f4f4f4; }
.tr.th { background: #efefef; }
.tr span { border-right: 1px solid #dedede; padding-left: 2.500px; }
.tr span:last-child { border: 0; }
.th span { padding-left: 4px; }
.th .up { margin-left: 8px; vertical-align: 1px; }
.tr .n1 { padding-left: 4px; }
.tr .n2 { background: linear-gradient(#c9c9c9, #c9c9c9) 19px 50% / 6px 1px no-repeat, linear-gradient(#ddd, #ddd) 19px 0 / 1px 6px no-repeat; padding-left: 28px; }
.minus { display: inline-block; width: 6px; height: 6px; border: 1px solid #bbb; margin-right: 5px; background: linear-gradient(#555, #555) 50% 50% / 3px 1px no-repeat; }
.acts { display: flex; justify-content: flex-end; gap: 2.500px; padding-top: 1px; }
.acts div, .upd div { width: 21.700px; height: 22px; border: 1px solid #bcbcbc; display: grid; place-items: center; }
.acts svg { width: 17px; height: 17px; fill: none; stroke: #999; stroke-width: 1.300; }
.s2 h3 { height: 20px; }
.form { display: grid; grid-template-columns: 1fr 94px; grid-auto-rows: 15.200px; row-gap: 1.500px; align-items: center; padding-top: 2px; }
.form label { padding-top: 1.500px; }
.f { height: 15.200px; background: #fff; border: 1px solid #8b8b8b; display: flex; align-items: center; padding: 1px 3px 0 2px; }
.f .caret { margin-left: auto; border-width: 3px 2.500px 0; }
.s3 h3 { height: 20px; gap: 7px; padding: 2px 0 0 1.500px; }
.s4 h3 { height: 21px; padding-top: 1px; }
.upd { display: flex; align-items: center; justify-content: space-between; padding-top: 2px; }
.upd svg { width: 16px; height: 17px; }
.upd div { border-color: #777; }
.collapse { height: 12px; border-bottom: 1px solid #ccc; display: grid; place-items: center; }
.btns { display: flex; justify-content: flex-end; gap: 3px; padding: 4.500px 7px 0; }
.btns span { width: 44.500px; height: 15.500px; border: 1px solid #35819a; color: #147590; text-align: center; line-height: 14.500px; }
.btns .pri { background: #05637f; color: #fff; }
.cursor { position: absolute; left: 262px; top: 527px; width: 8px; height: 13px; z-index: 6; }
```
